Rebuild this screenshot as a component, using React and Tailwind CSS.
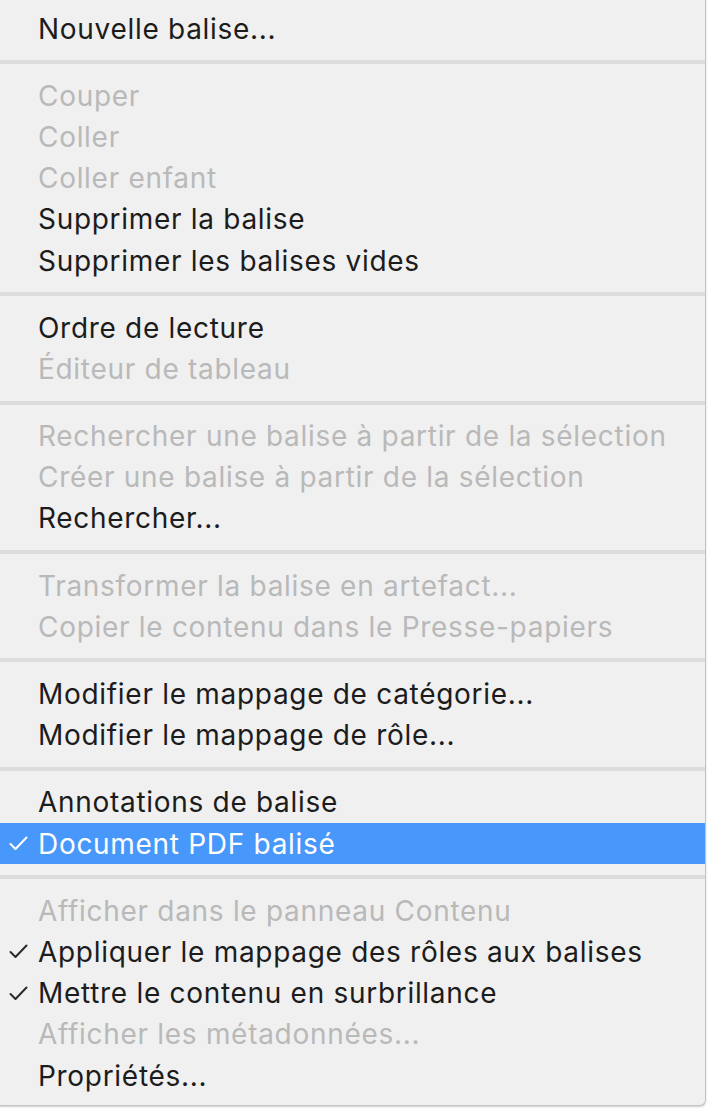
import React from "react";

const sections = [
  [{ label: "Nouvelle balise..." }],
  [
    { label: "Couper", disabled: true },
    { label: "Coller", disabled: true },
    { label: "Coller enfant", disabled: true },
    { label: "Supprimer la balise" },
    { label: "Supprimer les balises vides" },
  ],
  [
    { label: "Ordre de lecture" },
    { label: "Éditeur de tableau", disabled: true },
  ],
  [
    { label: "Rechercher une balise à partir de la sélection", disabled: true },
    { label: "Créer une balise à partir de la sélection", disabled: true },
    { label: "Rechercher..." },
  ],
  [
    { label: "Transformer la balise en artefact...", disabled: true },
    { label: "Copier le contenu dans le Presse-papiers", disabled: true },
  ],
  [
    { label: "Modifier le mappage de catégorie..." },
    { label: "Modifier le mappage de rôle..." },
  ],
  [
    { label: "Annotations de balise" },
    { label: "Document PDF balisé", checked: true, active: true },
  ],
  [
    { label: "Afficher dans le panneau Contenu", disabled: true },
    { label: "Appliquer le mappage des rôles aux balises", checked: true },
    { label: "Mettre le contenu en surbrillance", checked: true },
    { label: "Afficher les métadonnées...", disabled: true },
    { label: "Propriétés..." },
  ],
];

const Check = ({ white }) => (
  <svg width="19" height="15" viewBox="0 0 19 15" fill="none">
    <path
      d="M1.5 8 L6.5 13 L17.5 1.5"
      stroke={white ? "#ffffff" : "#2a2a2a"}
      strokeWidth="2"
      strokeLinecap="round"
      strokeLinejoin="round"
    />
  </svg>
);

const MenuItem = ({ item }) => {
  let color = "text-[#1c1c1c]";
  if (item.disabled) color = "text-[#b9b9b9]";
  if (item.active) color = "text-white";
  return (
    <div
      className={`flex items-center h-[41.2px] ${
        item.active ? "bg-[#4898fc]" : ""
      }`}
    >
      <div className="w-[38px] h-full flex items-center pl-[9px]">
        {item.checked && <Check white={item.active} />}
      </div>
      <span
        className={`text-[28px] tracking-[0.7px] leading-none whitespace-nowrap ${color}`}
      >
        {item.label}
      </span>
    </div>
  );
};

const App = () => {
  return (
    <div className="w-[710px] h-[1116px] bg-white overflow-hidden font-['Inter',sans-serif]">
      <div className="w-[706px] bg-[#f0f0f0] pt-[8px] pb-[9px] rounded-br-[6px] border-r border-b border-[#c4c4c4] shadow-[0_1px_2px_rgba(0,0,0,0.2)]">
        {sections.map((items, i) => (
          <div key={i}>
            {i > 0 && <div className="mt-[11px] mb-[11px] h-[4px] bg-[#dcdcdc]" />}
            {items.map((item) => (
              <MenuItem key={item.label} item={item} />
            ))}
          </div>
        ))}
      </div>
    </div>
  );
};

export default App;
